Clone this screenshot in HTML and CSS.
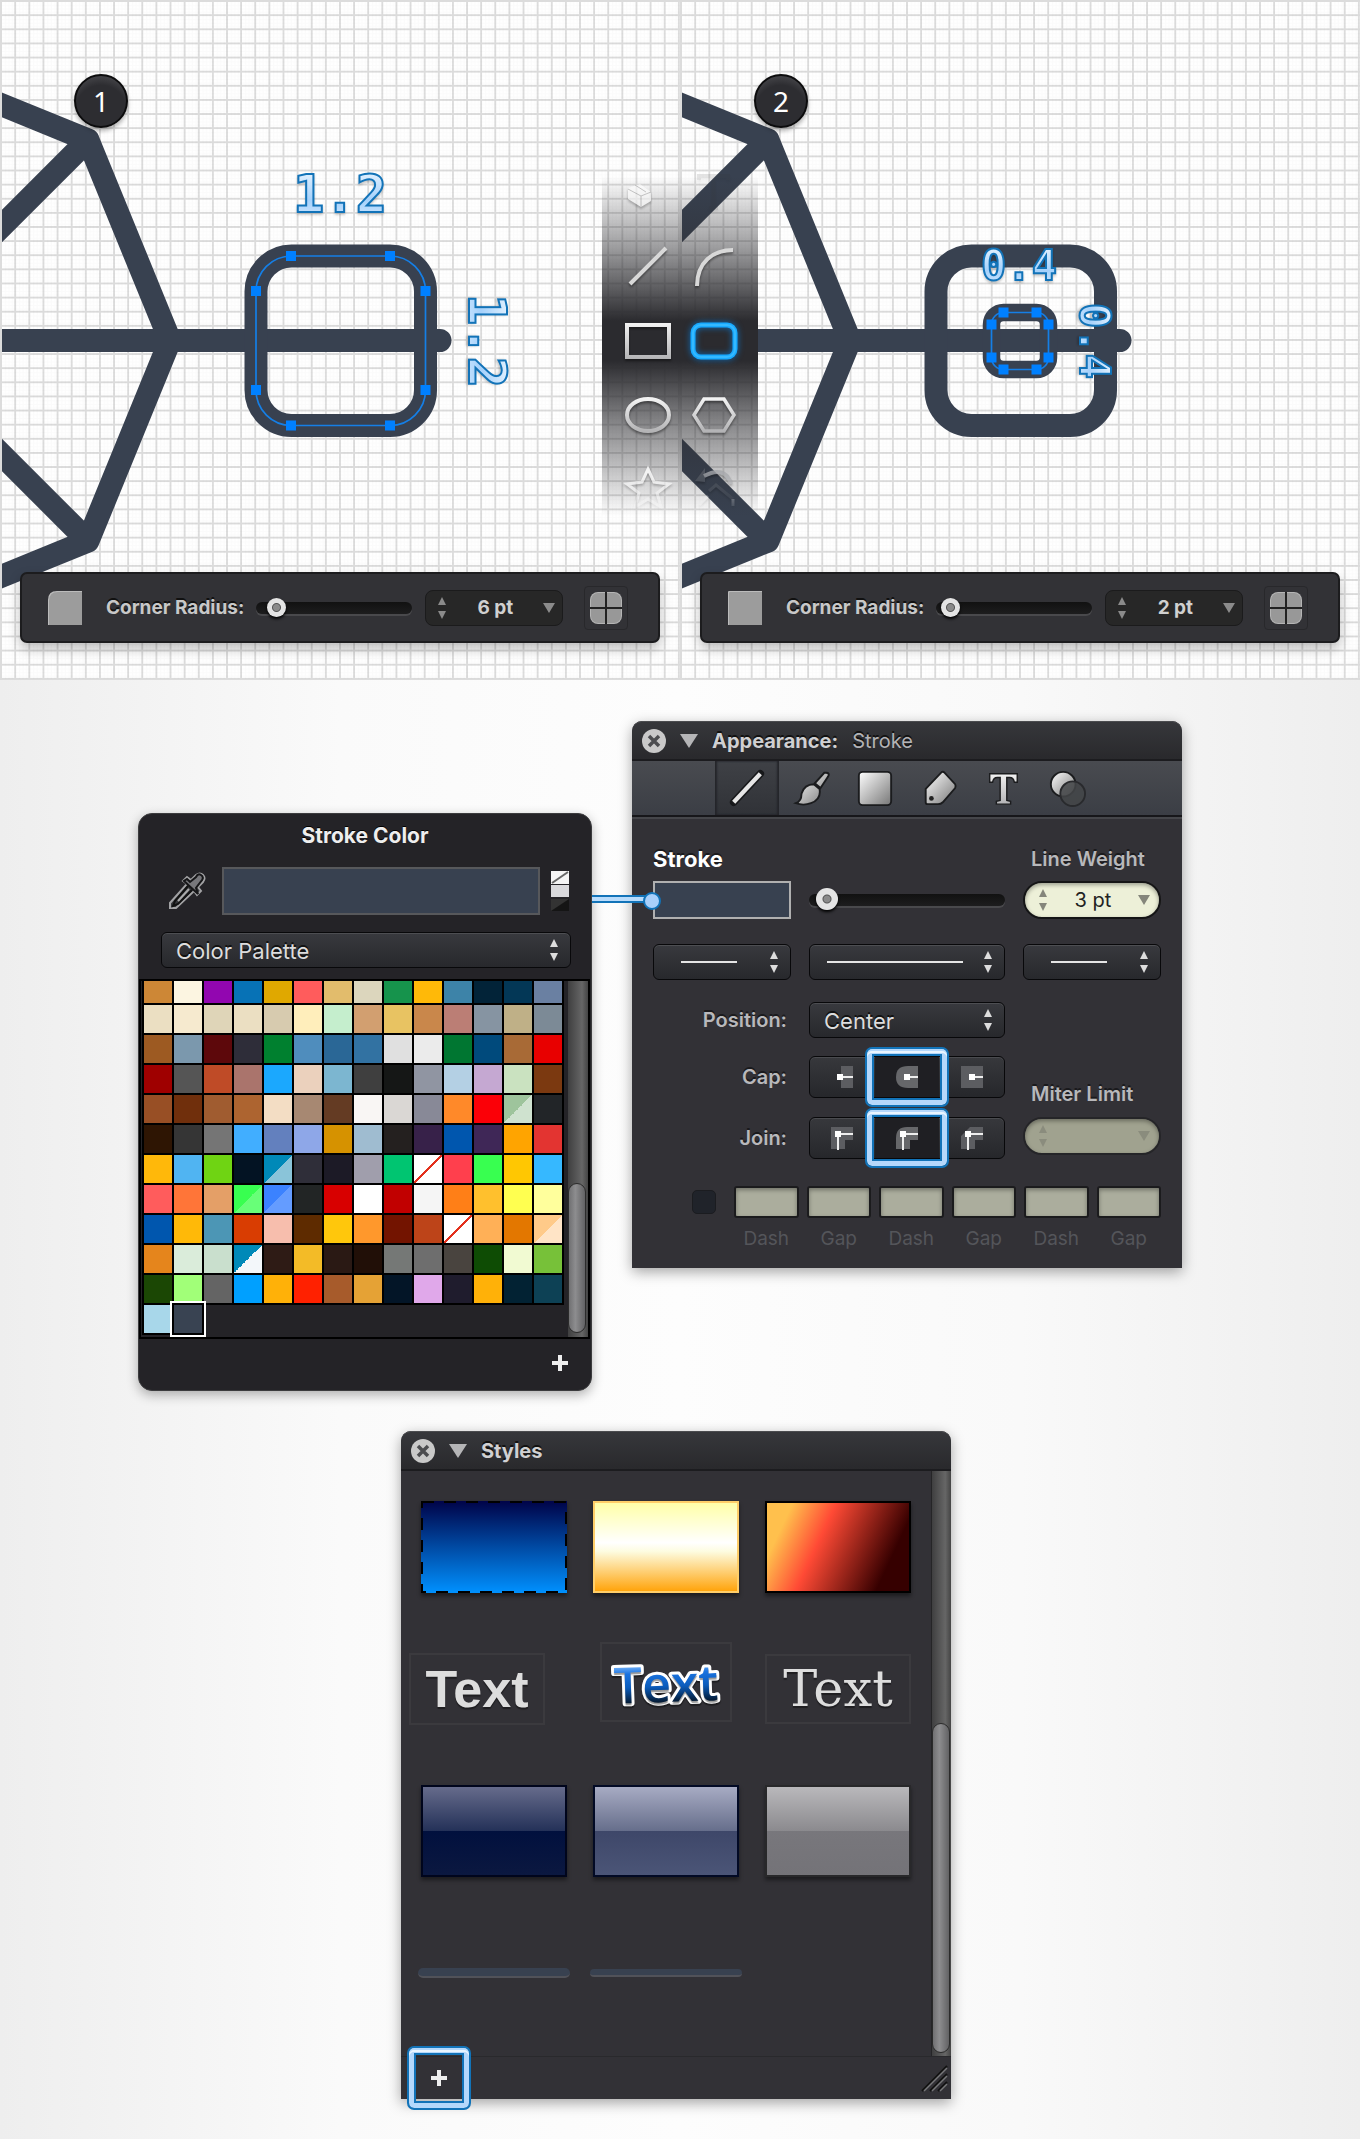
FILE: index.html
```html
<!DOCTYPE html>
<html lang="en">
<head>
<meta charset="utf-8">
<meta name="viewport" content="width=device-width, initial-scale=1">
<title>Rounded rectangles and stroke style</title>
<link rel="stylesheet" href="styles.css">
</head>
<body>
<svg class="defs" aria-hidden="true">
  <defs>
    <pattern id="grid" x="2" y="2" width="14.12" height="14.12" patternUnits="userSpaceOnUse">
      <path d="M13.2 0V14.12M0 13.2H14.12" stroke="#000" stroke-opacity=".14" stroke-width="1.8"/>
      <path d="M3.5 0V14.12M7 0V14.12M10.5 0V14.12M0 3.5H14.12M0 7H14.12M0 10.5H14.12" stroke="#000" stroke-opacity=".015" stroke-width="1"/>
    </pattern>
    <linearGradient id="metal" x1="0" y1="0" x2="1" y2="1"><stop offset="0" stop-color="#fff"/><stop offset="1" stop-color="#777"/></linearGradient>
    <linearGradient id="silver" x1="0" y1="0" x2="0" y2="1"><stop offset="0" stop-color="#f2f2f2"/><stop offset="1" stop-color="#b4b4b6"/></linearGradient>
    <linearGradient id="ice" x1="0" y1="0" x2="0" y2="1"><stop offset="0" stop-color="#f4faff"/><stop offset=".6" stop-color="#a5d1fb"/><stop offset="1" stop-color="#d8ecff"/></linearGradient>
    <g id="handle"><rect x="-5" y="-5" width="10" height="10" fill="#0080ff"/></g>
    <g id="frame" fill="none" stroke="#384150" stroke-width="23" stroke-linejoin="round" stroke-linecap="round">
      <path d="M-30 92L88 140L170 340.500L88 541L-30 589M-30 258L88 140M-30 423L88 541M-30 340.500H440"/>
      <rect x="256" y="256" width="169.500" height="169.500" rx="35.500"/>
    </g>
    <symbol id="updown" viewBox="0 0 10 24"><path d="M5 1L9 9H1ZM1 15H9L5 23Z" fill="currentColor"/></symbol>
    <symbol id="down" viewBox="0 0 12 10"><path d="M0 0H12L6 10Z" fill="currentColor"/></symbol>
    <symbol id="close" viewBox="0 0 24 24"><circle cx="12" cy="12" r="12" fill="#c9c9c9"/><path d="M7 7L17 17M17 7L7 17" stroke="#4c4d50" stroke-width="3.500"/></symbol>
    <symbol id="fold" viewBox="0 0 18 14"><path d="M0 0H18L9 14Z" fill="#b5b5b7"/></symbol>
    <symbol id="plus" viewBox="0 0 16 16"><path d="M6 0H10V6H16V10H10V16H6V10H0V6H6Z" fill="#eee"/></symbol>
    <symbol id="quad" viewBox="0 0 32 32"><rect width="32" height="32" rx="8" fill="#b5b5b5"/><rect x="1" y="1" width="30" height="30" rx="7" fill="#989898"/><path d="M16 0V32M0 16H32" stroke="#222" stroke-width="2"/></symbol>
  </defs>
</svg>

<section class="canvases">
  <div class="canvas">
    <svg class="scene" viewBox="0 0 680 680" preserveAspectRatio="xMinYMin slice">
      <rect width="680" height="680" fill="#fff"/><rect width="680" height="680" fill="url(#grid)"/>
      <use href="#frame"/>
      <rect x="256" y="256" width="169.500" height="169.500" rx="35.500" fill="none" stroke="#157fe6" stroke-width="1.700"/>
      <use href="#handle" x="291" y="256"/><use href="#handle" x="390" y="256"/><use href="#handle" x="291" y="425.500"/><use href="#handle" x="390" y="425.500"/>
      <use href="#handle" x="256" y="291"/><use href="#handle" x="256" y="390"/><use href="#handle" x="425.500" y="291"/><use href="#handle" x="425.500" y="390"/>
      <text class="measure measure-large" x="340" y="212">1.2</text>
      <text class="measure measure-large" transform="translate(469 341) rotate(90)">1.2</text>
    </svg>
    <span class="badge">1</span>
    <div class="context-bar">
      <svg class="corner-icon" viewBox="0 0 34 34"><path d="M0 34V9Q0 0 9 0H34V34Z" fill="#bbb"/><path d="M1 34V10Q1 1 10 1H34V34Z" fill="#9c9c9c"/></svg>
      <label for="radius1">Corner Radius:</label>
      <input class="slider" id="radius1" type="range" min="0" max="1000" value="80">
      <div class="dark-field"><svg class="step"><use href="#updown"/></svg><input type="text" value="6 pt" aria-label="Corner radius"><svg class="drop"><use href="#down"/></svg></div>
      <button class="quad-button" aria-label="All corners"><svg><use href="#quad"/></svg></button>
    </div>
  </div>

  <div class="canvas">
    <svg class="scene" viewBox="0 0 680 680" preserveAspectRatio="xMinYMin slice">
      <rect width="680" height="680" fill="#fff"/><rect width="680" height="680" fill="url(#grid)"/>
      <use href="#frame"/>
      <rect x="311.500" y="312.500" width="57" height="57" rx="12" fill="none" stroke="#384150" stroke-width="17.500"/>
      <rect x="311.500" y="312.500" width="57" height="57" rx="12" fill="none" stroke="#157fe6" stroke-width="1.700"/>
      <use href="#handle" x="323.500" y="312.500"/><use href="#handle" x="356.500" y="312.500"/><use href="#handle" x="323.500" y="369.500"/><use href="#handle" x="356.500" y="369.500"/>
      <use href="#handle" x="311.500" y="324.500"/><use href="#handle" x="311.500" y="357.500"/><use href="#handle" x="368.500" y="324.500"/><use href="#handle" x="368.500" y="357.500"/>
      <text class="measure measure-small" x="339" y="280">0.4</text>
      <text class="measure measure-small" transform="translate(400 341) rotate(90)">0.4</text>
    </svg>
    <span class="badge">2</span>
    <div class="context-bar">
      <svg class="corner-icon" viewBox="0 0 34 34"><path d="M0 34V1Q0 0 1 0H34V34Z" fill="#bbb"/><path d="M1 34V2Q1 1 2 1H34V34Z" fill="#9c9c9c"/></svg>
      <label for="radius2">Corner Radius:</label>
      <input class="slider" id="radius2" type="range" min="0" max="1000" value="36">
      <div class="dark-field"><svg class="step"><use href="#updown"/></svg><input type="text" value="2 pt" aria-label="Corner radius"><svg class="drop"><use href="#down"/></svg></div>
      <button class="quad-button" aria-label="All corners"><svg><use href="#quad"/></svg></button>
    </div>
  </div>

  <div class="tools">
    <button class="tool faintest" aria-label="Slice"><svg viewBox="0 0 50 50"><path d="M5 20L17 16L28 24V33L18 39L5 31Z" fill="#fff"/><path d="M5 21L18 28L28 24M18 28V39M12 17L23 24" stroke="#aaa" fill="none"/></svg></button>
    <button class="tool ghost" aria-label="Text"><svg viewBox="0 0 50 50"><path d="M10 12V8H39V12M24.500 8V40M20 40H29" stroke="#333" fill="none" stroke-width="4"/></svg></button>
    <button class="tool" aria-label="Line"><svg viewBox="0 0 50 50"><path d="M7 42L43 6" stroke="#d8d8d8" stroke-width="4"/></svg></button>
    <button class="tool" aria-label="Arc"><svg viewBox="0 0 50 50"><path d="M8 44C8 20 24 8 44 8" stroke="#d8d8d8" stroke-width="4" fill="none"/></svg></button>
    <button class="tool" aria-label="Rectangle"><svg viewBox="0 0 50 50"><path fill="url(#silver)" fill-rule="evenodd" d="M2 7H48V43H2ZM6 11V39H44V11Z"/></svg></button>
    <button class="tool glow" aria-label="Rounded rectangle"><svg viewBox="0 0 50 50"><rect x="4" y="9" width="42" height="32" rx="8" fill="none" stroke="#18aaff" stroke-width="5"/><rect x="4" y="9" width="42" height="32" rx="8" fill="none" stroke="#35b9ff" stroke-width="2"/></svg></button>
    <button class="tool" aria-label="Ellipse"><svg viewBox="0 0 50 50"><ellipse cx="25" cy="25" rx="21" ry="16" fill="none" stroke="url(#silver)" stroke-width="4"/></svg></button>
    <button class="tool" aria-label="Polygon"><svg viewBox="0 0 50 50"><path d="M15 9H35L45 25L35 41H15L5 25Z" fill="none" stroke="url(#silver)" stroke-width="3.500"/></svg></button>
    <button class="tool faint" aria-label="Star"><svg viewBox="0 0 50 50"><path d="M25 5L31 18L46 20L34 29L38 43L25 35L12 43L16 29L4 20L19 18Z" fill="none" stroke="#fff" stroke-width="3"/></svg></button>
    <button class="tool faint" aria-label="Transform"><svg viewBox="0 0 50 50"><path d="M6 17L16 4V18Z" fill="#555a63"/><path d="M15 12Q36 1 42 20" fill="none" stroke="#a5a7ab" stroke-width="4"/><path d="M20 27L27 21L44 35" fill="none" stroke="#555a63" stroke-width="3"/><path d="M10 41L19 32M44 35V42" fill="none" stroke="#eee" stroke-width="3"/></svg></button>
  </div>
</section>

<main class="workspace">
  <div class="panel-row">
    <section class="color-panel">
      <h2>Stroke Color</h2>
      <div class="color-row">
        <button class="plain" aria-label="Pick color"><svg class="dropper" viewBox="0 0 38 38"><path d="M2 36V31L19 12L15 9L19 5L23 8L28 3Q32 0 35 3T35 10L30 15L33 19L29 23L26 19L8 36Z" fill="#37383c" stroke="#a2a2a4" stroke-width="2"/><path d="M16 9L30 22L28 16L34 8Q36 5 33 3T28 5L22 10L19 7Z" fill="#77777b" stroke="#161618" stroke-width="2"/><path d="M20 14L7 29L5 34L10 32L24 18" fill="none" stroke="#111" stroke-width="2"/><path d="M21 17L10 29" stroke="#aaa" stroke-width="2"/></svg></button>
        <button class="current-color" aria-label="Current color"></button>
        <svg class="modes" viewBox="0 0 18 42"><rect width="18" height="13" y="1" fill="#f4f4f4"/><path d="M1 13L17 2" stroke="#666" stroke-width="2"/><rect y="15" width="18" height="12" fill="#d9d9dc"/><rect y="29" width="18" height="12" fill="#151515"/><path d="M0 29H18L0 41Z" fill="#333"/></svg>
      </div>
      <div class="select palette-select"><select aria-label="Color source"><option>Color Palette</option></select><svg class="step"><use href="#updown"/></svg></div>
      <div class="palette">
        <div class="swatches" id="swatches"></div>
        <div class="scroll"><div class="thumb palette-thumb"></div></div>
      </div>
      <div class="color-footer"><button class="plain" aria-label="Add color"><svg class="plus"><use href="#plus"/></svg></button></div>
    </section>

    <section class="panel">
      <header class="panel-head">
        <button class="plain" aria-label="Close"><svg class="close"><use href="#close"/></svg></button>
        <button class="plain" aria-label="Collapse"><svg class="fold"><use href="#fold"/></svg></button>
        <h2>Appearance:</h2><span>Stroke</span>
      </header>
      <nav class="tabs">
        <button class="active" aria-label="Stroke"><svg viewBox="0 0 40 40"><path d="M6 35L34 5" stroke="#17181a" stroke-width="8" stroke-linecap="round"/><path d="M6 35L34 5" stroke="#e6e6e6" stroke-width="4.500"/></svg></button>
        <button aria-label="Brush"><svg viewBox="0 0 40 40"><path d="M36 4Q40 4 38 8L30 20L24 15L34 4ZM23 16L29 21Q31 32 20 36Q12 39 4 36Q10 34 10 26Q13 16 23 16Z" fill="url(#metal)" stroke="#1b1c1e" stroke-width="2"/></svg></button>
        <button aria-label="Fill"><svg viewBox="0 0 40 40"><rect x="3" y="3" width="34" height="35" rx="4" fill="url(#metal)" stroke="#1b1c1e" stroke-width="2"/></svg></button>
        <button aria-label="Name"><svg viewBox="0 0 40 40"><path d="M6 21L22 4Q24 2 26 4L37 16Q38 18 37 20L24 35Q22 37 19 37H8Q6 37 6 35Z" fill="url(#metal)" stroke="#1b1c1e" stroke-width="2"/><circle cx="12" cy="31" r="2.500" fill="#222"/></svg></button>
        <button aria-label="Text"><svg viewBox="0 0 40 40"><path d="M6 5H35V14H32Q31 9 27 9H24V33L28 34V37H13V34L17 33V9H14Q10 9 9 14H6Z" fill="url(#silver)" stroke="#1b1c1e" stroke-width="1.500"/></svg></button>
        <button aria-label="Blending"><svg viewBox="0 0 40 40"><circle cx="16" cy="16" r="13" fill="url(#metal)" stroke="#1b1c1e" stroke-width="2"/><circle cx="26" cy="26" r="13" fill="#444649" fill-opacity=".85" stroke="#292a2d" stroke-width="2"/></svg></button>
      </nav>
      <div class="settings">
        <div class="row captions"><h3>Stroke</h3><span></span><label for="weight">Line Weight</label></div>
        <div class="row weight-row">
          <div class="swatch-holder"><button class="stroke-swatch" aria-label="Stroke color"></button><span class="connector"></span></div>
          <input class="slider wide" type="range" min="0" max="1000" value="40" aria-label="Line weight">
          <div class="light-field"><svg class="step"><use href="#updown"/></svg><input id="weight" type="text" value="3 pt"><svg class="drop"><use href="#down"/></svg></div>
        </div>
        <div class="row line-row">
          <div class="select"><select aria-label="Start arrow"><option></option></select><span class="line-sample"></span><svg class="step"><use href="#updown"/></svg></div>
          <div class="select"><select aria-label="Line pattern"><option></option></select><span class="line-sample"></span><svg class="step"><use href="#updown"/></svg></div>
          <div class="select"><select aria-label="End arrow"><option></option></select><span class="line-sample"></span><svg class="step"><use href="#updown"/></svg></div>
        </div>
        <div class="row position-row"><label class="side" for="position">Position:</label><div class="select"><select id="position"><option>Center</option></select><svg class="step"><use href="#updown"/></svg></div></div>
        <div class="row ends">
          <div class="ends-labels"><span class="side" id="cap">Cap:</span><span class="side" id="join">Join:</span></div>
          <div class="ends-controls">
            <div class="segments" role="group" aria-labelledby="cap">
              <button aria-label="Butt"><svg viewBox="0 0 24 24"><path d="M11 1H23V23H11Z" fill="#5c5d61"/><path d="M10 12H23" stroke="#eee" stroke-width="2"/><path d="M7 9H13V15H7Z" fill="#fff"/></svg></button>
              <button class="chosen" aria-label="Round"><svg viewBox="0 0 24 24"><path d="M23 1H13Q1 1 1 12T13 23H23Z" fill="#66676a"/><path d="M11 12H23" stroke="#eee" stroke-width="2"/><path d="M9 9H15V15H9Z" fill="#fff"/></svg><span class="ring"></span></button>
              <button aria-label="Square"><svg viewBox="0 0 24 24"><path d="M1 1H23V23H1Z" fill="#5c5d61"/><path d="M11 12H23" stroke="#eee" stroke-width="2"/><path d="M9 9H15V15H9Z" fill="#fff"/></svg></button>
            </div>
            <div class="segments" role="group" aria-labelledby="join">
              <button aria-label="Miter"><svg viewBox="0 0 24 24"><path d="M1 1H23V14H15V23H1Z" fill="#5c5d61"/><path d="M8 24V8H23" fill="none" stroke="#eee" stroke-width="2"/><path d="M5 5H11V11H5Z" fill="#fff"/></svg></button>
              <button class="chosen" aria-label="Round join"><svg viewBox="0 0 24 24"><path d="M23 1H12Q1 1 1 12V23H15V14H23Z" fill="#66676a"/><path d="M8 24V8H23" fill="none" stroke="#eee" stroke-width="2"/><path d="M5 5H11V11H5Z" fill="#fff"/></svg><span class="ring"></span></button>
              <button aria-label="Bevel"><svg viewBox="0 0 24 24"><path d="M23 1H10L1 10V23H15V14H23Z" fill="#5c5d61"/><path d="M8 24V8H23" fill="none" stroke="#eee" stroke-width="2"/><path d="M5 5H11V11H5Z" fill="#fff"/></svg></button>
            </div>
          </div>
          <div class="miter"><label for="miter">Miter Limit</label><div class="light-field off"><svg class="step"><use href="#updown"/></svg><input id="miter" type="text" disabled><svg class="drop"><use href="#down"/></svg></div></div>
        </div>
        <div class="dashes">
          <input type="checkbox" aria-label="Dashed">
          <label><input type="text" disabled>Dash</label><label><input type="text" disabled>Gap</label>
          <label><input type="text" disabled>Dash</label><label><input type="text" disabled>Gap</label>
          <label><input type="text" disabled>Dash</label><label><input type="text" disabled>Gap</label>
        </div>
      </div>
    </section>
  </div>

  <section class="panel styles-panel">
    <header class="panel-head">
      <button class="plain" aria-label="Close"><svg class="close"><use href="#close"/></svg></button>
      <button class="plain" aria-label="Collapse"><svg class="fold"><use href="#fold"/></svg></button>
      <h2>Styles</h2>
    </header>
    <div class="styles-body">
      <div class="style-grid">
        <button class="style blue" aria-label="Blue style"><svg viewBox="0 0 146 92"><rect x="1" y="1" width="144" height="90" fill="none" stroke="#000" stroke-width="2" stroke-dasharray="12 10"/></svg></button>
        <button class="style gold" aria-label="Gold style"></button>
        <button class="style fire" aria-label="Fire style"></button>
        <button class="text-style bold-text">Text</button>
        <button class="text-style comic-text"><svg viewBox="0 0 128 76"><defs><linearGradient id="sky" x1="0" y1="0" x2="0" y2="1"><stop offset=".2" stop-color="#8fc4ff"/><stop offset=".35" stop-color="#1a73e0"/><stop offset=".55" stop-color="#0b5cbc"/><stop offset=".8" stop-color="#041528"/></linearGradient></defs><text x="64" y="58" transform="rotate(-2 64 38)">Text</text></svg></button>
        <button class="text-style slab-text">Text</button>
        <button class="style navy" aria-label="Navy glass style"></button>
        <button class="style slate" aria-label="Slate glass style"></button>
        <button class="style gray" aria-label="Gray glass style"></button>
        <button class="line-style" aria-label="Thick line style"></button>
        <button class="line-style thin" aria-label="Thin line style"></button>
      </div>
      <div class="scroll"><div class="thumb styles-thumb"></div></div>
    </div>
    <footer class="styles-footer">
      <button class="plain add-style" aria-label="Add style"><svg class="plus"><use href="#plus"/></svg><span class="ring"></span></button>
      <svg class="grip" viewBox="0 0 28 28"><path d="M2 27L27 2M10 27L27 10M18 27L27 18" stroke="#111" stroke-width="2"/><path d="M4 27L27 4M12 27L27 12M20 27L27 20" stroke="#77777a" stroke-width="1.500"/></svg>
    </footer>
  </section>
</main>
<script src="script.js"></script>
</body>
</html>
```
FILE: styles.css
```css
* { box-sizing: border-box; }
body { margin: 0; font-family: Inter, "Liberation Sans", sans-serif; font-size: 20px; line-height: 24px; color: #c9c9cc; background: #f0f0f0; }
h2, h3 { margin: 0; font-size: 20px; line-height: 24px; font-weight: 700; }
button { font: inherit; color: inherit; padding: 0; border: 0; background: none; }
svg { display: block; }
input, select { font: inherit; color: inherit; margin: 0; min-width: 0; }
.defs { position: absolute; width: 0; height: 0; }

.canvases { position: relative; display: grid; grid-template-columns: 1fr 1fr; }
.canvas { position: relative; display: flex; flex-direction: column; justify-content: flex-end; min-height: 680px; padding: 0 20px 37px; overflow: hidden; }
.canvas::after { content: ""; position: absolute; inset: 0; border: 2px solid #dcdcdc; border-right-width: 0; border-bottom-width: 1px; pointer-events: none; }
.scene { position: absolute; inset: 0; width: 100%; height: 100%; }
.measure { font-family: "DejaVu Sans Mono", monospace; font-weight: 700; text-anchor: middle; fill: url(#ice); stroke: #1273b8; stroke-width: 2px; filter: drop-shadow(0 2px 1px rgba(0,0,0,.2)); }
.measure-large { font-size: 52px; }
.measure-small { font-size: 42px; }
.badge { position: absolute; left: 74px; top: 74px; width: 54px; height: 54px; border-radius: 50%; border: 2px solid #0c0c0d; background: radial-gradient(circle at 50% 70%, #2d2d31 60%, #57575b); box-shadow: 0 3px 4px rgba(0,0,0,.3); color: #fff; font: 28px/50px "Noto Sans", "DejaVu Sans", sans-serif; text-align: center; }

.context-bar { position: relative; display: flex; align-items: center; height: 71px; padding: 0 30px 0 26px; border: 2px solid #1c1c1e; border-radius: 7px; background: #323236; box-shadow: 0 6px 12px rgba(0,0,0,.25); color: #c8c8c8; font-weight: 700; text-shadow: 0 -2px 0 #111; font-size: 19px; }
.corner-icon { width: 34px; height: 34px; margin-right: 24px; }
.context-bar label { flex: 0 0 138px; white-space: nowrap; }
.slider { appearance: none; width: 156px; height: 24px; margin: 0 13px 0 12px; background: none; }
.slider.wide { width: 100%; margin: 0; align-self: center; }
.slider::-webkit-slider-runnable-track { height: 12px; border-radius: 6px; background: linear-gradient(#111, #1d1d1e); box-shadow: 0 2px 0 #49494c; }
.slider::-webkit-slider-thumb { appearance: none; width: 19px; height: 19px; margin-top: -4px; border-radius: 50%; background: radial-gradient(circle, #8a8a8a 0 3px, #555 4px, #e4e4e4 5px); box-shadow: 0 2px 3px #000; }
.slider.wide::-webkit-slider-thumb { width: 22px; height: 22px; margin-top: -6px; }
.step { width: 10px; height: 24px; flex: none; }
.drop { width: 12px; height: 10px; flex: none; }
.dark-field { display: flex; align-items: center; width: 138px; height: 36px; padding: 0 7px 0 11px; border: 1px solid #1b1b1c; border-radius: 8px; background: #272727; color: #8b8b8b; }
.dark-field input, .light-field input { flex: 1; width: 0; border: 0; background: none; text-align: center; color: #d0d0d0; font-weight: 700; }
.quad-button { display: grid; place-items: center; width: 44px; height: 44px; margin-left: auto; border: 1px solid #28282b; border-radius: 4px; }
.quad-button svg { width: 32px; height: 32px; }

.tools { position: absolute; left: 50%; top: 156px; width: 156px; margin-left: -78px; padding: 0 11px 0 13px; display: grid; grid-template-columns: 1fr 1fr; grid-auto-rows: 74px; background: linear-gradient(rgba(44,44,48,0) 20px, rgba(44,44,48,.45) 90px, #2b2b2f 165px 205px, rgba(44,44,48,.55) 270px, rgba(44,44,48,0) 360px); }
.tool { display: grid; place-items: center; }
.tool svg { width: 50px; height: 50px; filter: drop-shadow(0 2px 1px rgba(0,0,0,.4)); }
.glow svg { filter: drop-shadow(0 0 3px #0a6fc0); }
.faintest { opacity: .6; }
.ghost { opacity: .12; }
.faint { opacity: .8; -webkit-mask-image: linear-gradient(#000 20px, transparent 60px); }

.workspace { padding: 41px 0 40px; background: linear-gradient(90deg, #eee, #fafafa 25%, #fdfdfd 50%, #f9f9f9 75%, #eee); }
.panel-row { display: flex; justify-content: center; align-items: flex-start; gap: 40px; padding-right: 40px; }
.color-panel { flex: 0 0 454px; margin-top: 92px; border: 1px solid #3c3c3e; border-radius: 14px; background: #242327; box-shadow: 0 4px 12px rgba(0,0,0,.3); }
.color-panel h2 { padding: 10px 0 19px; font-size: 21px; text-align: center; color: #eee; text-shadow: 0 -1px 0 #000; }
.color-row { display: flex; align-items: center; padding: 0 22px 0 29px; }
.dropper { width: 38px; height: 38px; }
.current-color { flex: 1; height: 48px; margin: 0 11px 0 16px; border: 2px solid #57585b; background: #384150; }
.modes { width: 18px; height: 42px; }
.select { position: relative; display: flex; align-items: center; justify-content: flex-end; height: 36px; padding-right: 11px; color: #ddd; border: 1px solid #08080a; border-radius: 6px; background: linear-gradient(#38393e, #27282c); box-shadow: inset 0 1px 0 #4d4e52; }
.select select { position: absolute; inset: 0; width: 100%; padding: 1px 14px 0; appearance: none; border: 0; background: none; font-size: 22px; font-weight: 400; text-shadow: 0 -2px 0 #111; }
.select .step { pointer-events: none; }
.palette-select { margin: 17px 20px 11px 22px; }
.palette { display: flex; justify-content: space-between; height: 360px; margin-right: 1px; border: 2px solid #000; background: #242327; }
.swatches { flex: 0 0 423px; display: grid; grid-template: 22px / repeat(14, 28px); grid-auto-rows: 28px; gap: 2px; align-content: start; padding-left: 3px; }
.swatch { box-shadow: 0 0 0 2px #000; }
.swatch.selected { position: relative; z-index: 1; outline: 2px solid #fff; outline-offset: 2px; }
.scroll { flex: 0 0 20px; background: linear-gradient(90deg, #3f3f40, #666 70%, #444); }
.thumb { width: 18px; border: 1px solid #2b2b2b; border-radius: 9px; background: linear-gradient(90deg, #707072, #8d8d8f 40%, #626264); }
.palette-thumb { height: 150px; margin-top: 202px; }
.color-footer { display: flex; justify-content: flex-end; padding: 16px 23px 19px; }
.plus { width: 16px; height: 16px; }

.panel { flex: 0 0 550px; background: #323136; border-radius: 10px 10px 0 0; box-shadow: 0 4px 14px rgba(0,0,0,.35); }
.panel-head { display: flex; align-items: center; height: 40px; padding: 0 10px; color: #b3b3b6; border-top: 1px solid #4b4c4f; border-radius: 10px 10px 0 0; border-bottom: 2px solid #1c1c1f; background: linear-gradient(#36373b, #29292c); text-shadow: 0 -2px 0 #111; }
.panel-head h2 { margin: 0 14px; color: #d0d0d2; }
.close { width: 24px; height: 24px; }
.fold { width: 18px; height: 14px; margin-left: 14px; }
.tabs { display: flex; height: 56px; padding-left: 83px; background: linear-gradient(#494b50, #3b3e45); border-bottom: 2px solid #17171a; box-shadow: 0 2px 0 #45464a; }
.tabs button { width: 64px; display: grid; place-items: center; }
.tabs svg { width: 38px; height: 38px; }
.tabs .active { background: linear-gradient(#3f4146, #303237); box-shadow: inset 2px 0 2px #24252a, inset -2px 0 2px #24252a; }
.settings { padding: 28px 21px 17px; text-shadow: 0 -2px 0 #1a1a1d; font-weight: 600; color: #b8b8bb; }
.row { display: grid; grid-template-columns: 138px 1fr 138px; column-gap: 18px; }
.captions { align-items: end; line-height: 28px; }
.captions h3 { font-size: 22px; line-height: 28px; color: #fff; }
.captions label, .miter label { padding-left: 8px; white-space: nowrap; }
.weight-row { margin-top: 8px; }
.swatch-holder { position: relative; }
.stroke-swatch { display: block; width: 100%; height: 38px; border: 2px solid #b0b0b0; background: #384150; }
.connector { position: absolute; right: 100%; top: 14px; width: 61px; height: 8px; border: solid #1273b8; border-width: 2px 0; background: #b9dcfc; }
.connector::after { content: ""; position: absolute; right: -8px; top: -5px; width: 14px; height: 14px; border: 2px solid #1273b8; border-radius: 50%; background: #a9d0fb; }
.light-field { display: flex; align-items: center; height: 38px; padding: 0 9px 0 13px; border: 2px solid #151516; border-radius: 19px; background: #edf0d8; box-shadow: inset 0 2px 4px rgba(0,0,0,.35); color: #85867b; text-shadow: none; }
.light-field input { color: #222; font-weight: 400; }
.off { background: #a0a28f; border-color: #252528; color: #8a8c7d; }
.line-row { margin-top: 25px; }
.line-sample { flex: 1; height: 2px; margin: 0 32px 0 27px; background: #e5e5e5; pointer-events: none; z-index: 1; }
.line-row .select:nth-child(2) .line-sample { margin: 0 20px 0 17px; }
.position-row { margin-top: 22px; align-items: center; }
.side { padding-right: 4px; text-align: right; }
.ends { margin-top: 8px; }
.ends-labels, .ends-controls { display: grid; grid-template-rows: 61px 61px; align-items: center; }
.segments { display: grid; grid-template-columns: 1fr 1fr 1fr; height: 42px; border: 1px solid #08080a; border-radius: 6px; background: linear-gradient(#37383c, #26272b); box-shadow: inset 0 1px 0 #4a4b4f; }
.segments button { position: relative; display: grid; place-items: center; }
.segments svg { width: 24px; height: 24px; }
.segments .chosen { background: #1f1f23; }
.ring { position: absolute; inset: -10px; border: 2px solid #1273b8; border-radius: 7px; box-shadow: inset 0 2px 0 #b5d8fb, inset 0 4px 0 #e9f5ff, inset 0 0 0 5px #b5d8fb, inset 0 0 0 7px #1273b8; pointer-events: none; }
.miter { padding-top: 36px; }
.light-field.off { margin-top: 11px; }
.dashes { display: flex; gap: 8px; margin-top: 18px; padding-left: 39px; font-weight: 400; font-size: 19px; color: #54555a; text-shadow: none; }
.dashes input[type="checkbox"] { appearance: none; width: 24px; height: 24px; margin: 4px 10px 0 0; border: 1px solid #1b1c20; border-radius: 5px; background: #20232a; }
.dashes label { flex: 1; display: flex; flex-direction: column; align-items: center; gap: 9px; }
.dashes input[type="text"] { width: 100%; height: 32px; border: 2px solid #1b1b1d; border-radius: 3px; background: #abad9d; box-shadow: inset 0 2px 4px rgba(0,0,0,.35); }

.styles-panel { width: 550px; margin: 40px auto 0; transform: translateX(-4px); }
.styles-body { display: flex; justify-content: space-between; height: 586px; padding-left: 7px; border-bottom: 1px solid #29292c; }
.style-grid { display: grid; grid-template-columns: repeat(3, 172px); grid-auto-rows: 142px; place-items: center; padding-top: 5px; }
.styles-body .scroll { border-left: 1px solid #252527; }
.styles-thumb { height: 330px; margin-top: 252px; }
.style { width: 146px; height: 92px; border: 2px solid #000; box-shadow: 0 3px 4px rgba(0,0,0,.45); }
.style.blue { border: 0; background: linear-gradient(#000348, #0091ff); }
.gold { border-color: #ffce69; background: linear-gradient(#ffffa8, #fff 45%, #fdfce0 55%, #ffa40c); }
.fire { background: linear-gradient(115deg, #ffc04d 14%, #ff4a35 38%, #360000 82%); }
.navy { border-color: #00051c; background: linear-gradient(#666b8b, #243158 50%, #01103e 50%, #0b1840); }
.slate { border-color: #020a25; background: linear-gradient(#a7abc3, #666e8b 50%, #3e4769 50%, #4b5577); }
.gray { border-color: #28282a; background: linear-gradient(#b9b8bb, #8b8a8e 50%, #78777c 50%, #747378); }
.text-style { border: 2px solid #3b3a3e; color: #ddd; text-shadow: 0 2px 1px rgba(0,0,0,.4); }
.bold-text { width: 136px; height: 72px; justify-self: start; margin-left: 1px; font: 700 52px/68px "Liberation Sans", sans-serif; }
.comic-text { width: 132px; height: 80px; margin-bottom: 14px; }
.comic-text text { font: 600 50px "Open Sans", sans-serif; text-anchor: middle; fill: url(#sky); stroke: #fff; stroke-width: 6px; stroke-linejoin: round; paint-order: stroke; }
.slab-text { width: 146px; height: 70px; margin-bottom: 0; font: 51px/66px "DejaVu Serif", serif; }
.line-style { width: 152px; height: 10px; border-radius: 5px; background: #384150; border-bottom: 2px solid #515259; }
.line-style.thin { height: 8px; }
.styles-footer { display: flex; align-items: center; justify-content: space-between; height: 42px; padding: 0 3px 0 26px; }
.add-style { position: relative; width: 24px; height: 24px; display: grid; place-items: center; }
.add-style .ring { inset: -20px; }
.grip { width: 28px; height: 28px; }
```
FILE: script.js
```js
// One line per palette row; "a/b" is a color with its translucent half, "none" is the empty color.
const rows = [
  "cd8736 fcf5e1 9206b0 0772b6 e0a800 ff5c5c e2bc6c dcd6bd 16934c ffb908 3d83a8 022338 033756 6a80a2",
  "ebdfc2 f6eacf dfd5b8 ebdfc2 d7cbaf ffeebb c5eecd d29f70 e8c362 c9874b bb7e75 8694a2 bfb087 7c8a96",
  "9d5a22 7b98ad 5d080b 2e2d39 00802f 4f8dbd 2a6796 3272a2 e0e0e0 ebebeb 007631 004a7c a86a36 e80000",
  "9f0000 555555 bf4b27 aa746c 1ba8fe ebd1bd 7cb6d0 3f3f3f 151716 9095a2 b4d0e4 c5a8d2 cae2c0 7b3910",
  "984f25 702f0c a05c30 ad6430 f3ddc4 a78872 643b23 f9f6f4 dad7d4 888997 ff8929 fb0007 9ec49c/cfe2cf 222528",
  "2e1503 353535 757575 41aeff 6380be 8ea7e8 d69200 9fbcd0 24201f 372149 0056ae 3f2757 ffa400 e33431",
  "ffb80a 50b4f2 6fd413 031323 0089b8/8ac4d9 2f2e39 1c1a26 a09eac 00c571 none ff3f4d 38ff50 ffc702 36b8ff",
  "ff5c5c ff7538 e49f67 38ff50/68ff78 3b82ff/649cff 222525 d80000 ffffff c10000 f5f5f5 ff7f17 ffc02d ffff50 ffff9c",
  "0056ae ffb908 4c96b5 d93d02 f7bead 5e2b00 ffc70c ff982c 731400 bd4419 none ffb057 e37700 ffca89/ffe4c6",
  "e5851c daecda c9dfcd 0089b8/f3f7fa 2e1b15 f3bb27 2a1914 210f07 757876 6e6e6e 49443f 0e4c04 f1fad2 77c139",
  "1b4704 a1ff78 646464 00a0ff ffb108 ff2100 a75b2b e5a235 031527 e0a8ea 1f1c2d ffb108 022233 0d4155",
  "a8d7ea 394352"
];
const box = document.getElementById("swatches");
rows.join(" ").split(" ").forEach((entry, i, all) => {
  const [a, b] = entry.split("/");
  const button = document.createElement("button");
  button.className = "swatch" + (i === all.length - 1 ? " selected" : "");
  button.setAttribute("aria-label", entry);
  if (entry === "none") button.style.background = "linear-gradient(135deg, #fff 48%, #e3301c 48% 52%, #fff 52%)";
  else button.style.background = b ? `linear-gradient(135deg, #${a} 50%, #${b} 50%)` : "#" + a;
  box.append(button);
});
```
